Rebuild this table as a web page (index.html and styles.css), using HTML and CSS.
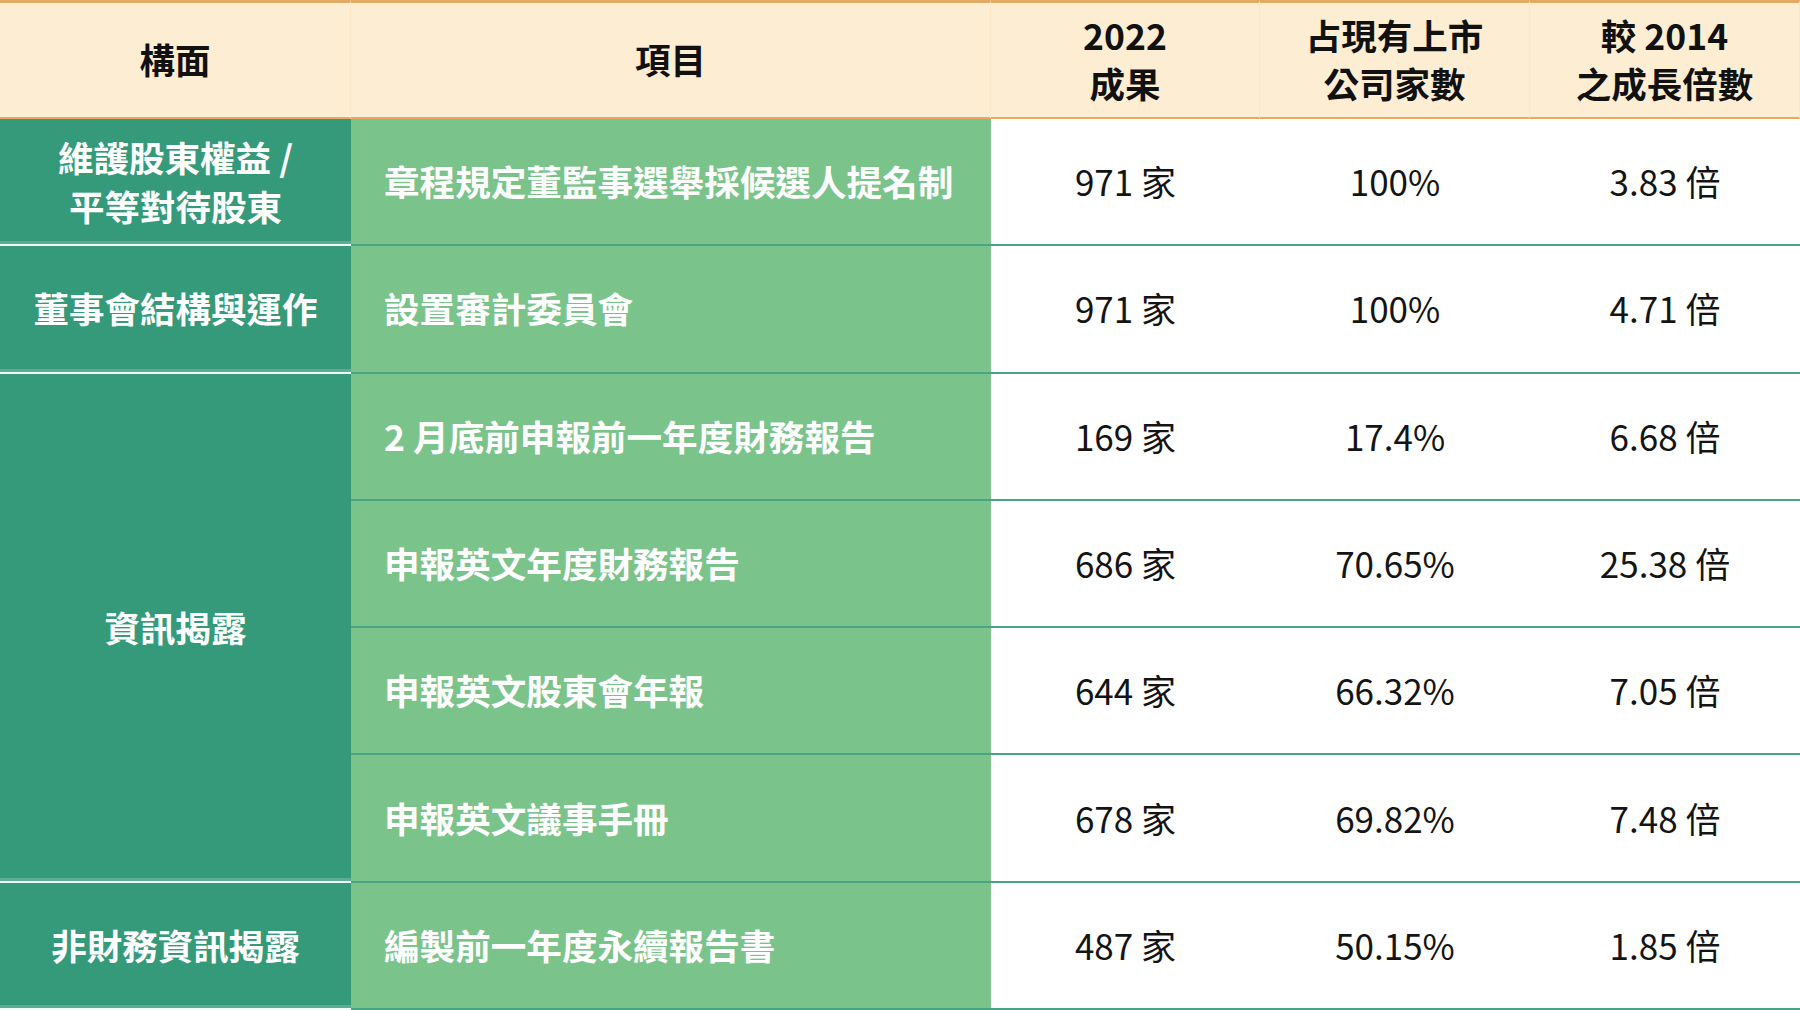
FILE: index.html
```html
<!DOCTYPE html>
<html lang="zh-Hant">
<head>
<meta charset="utf-8">
<title>公司治理成果</title>
<link rel="stylesheet" href="styles.css">
</head>
<body>
<div class="table">
  <div class="hd">構面</div>
  <div class="hd">項目</div>
  <div class="hd">2022<br>成果</div>
  <div class="hd">占現有上市<br>公司家數</div>
  <div class="hd">較 2014<br>之成長倍數</div>

  <div class="cat">維護股東權益 /<br>平等對待股東</div>
  <div class="item">章程規定董監事選舉採候選人提名制</div>
  <div class="num">971 家</div>
  <div class="num">100%</div>
  <div class="num">3.83 倍</div>

  <div class="cat">董事會結構與運作</div>
  <div class="item">設置審計委員會</div>
  <div class="num">971 家</div>
  <div class="num">100%</div>
  <div class="num">4.71 倍</div>

  <div class="cat span4">資訊揭露</div>
  <div class="item">2 月底前申報前一年度財務報告</div>
  <div class="num">169 家</div>
  <div class="num">17.4%</div>
  <div class="num">6.68 倍</div>

  <div class="item">申報英文年度財務報告</div>
  <div class="num">686 家</div>
  <div class="num">70.65%</div>
  <div class="num">25.38 倍</div>

  <div class="item">申報英文股東會年報</div>
  <div class="num">644 家</div>
  <div class="num">66.32%</div>
  <div class="num">7.05 倍</div>

  <div class="item">申報英文議事手冊</div>
  <div class="num">678 家</div>
  <div class="num">69.82%</div>
  <div class="num">7.48 倍</div>

  <div class="cat">非財務資訊揭露</div>
  <div class="item">編製前一年度永續報告書</div>
  <div class="num">487 家</div>
  <div class="num">50.15%</div>
  <div class="num">1.85 倍</div>
</div>
</body>
</html>
```

FILE: styles.css
```css
* { box-sizing: border-box; }
html, body { margin: 0; padding: 0; background: #ffffff; }
body {
  font-family: "Noto Sans CJK TC", "Noto Sans", sans-serif;
  width: 1800px;
  height: 1010px;
  overflow: hidden;
}
.table {
  display: grid;
  grid-template-columns: 351px 640px 269px 270px 270px;
  grid-template-rows: 119px repeat(7, 1fr);
  height: 1010px;
}
.hd {
  background: #fdedd2;
  border-top: 3px solid #e2aa62;
  border-bottom: 2px solid #e2aa62;
  border-right: 1px solid #fae8cb;
  display: flex;
  align-items: center;
  justify-content: center;
  text-align: center;
  font-size: 35.5px;
  font-weight: 700;
  line-height: 48px;
  color: #111;
  padding-bottom: 2px;
}
.hd:last-child { border-right: none; }
.cat {
  background: #359a7a;
  color: #fff;
  font-size: 35.5px;
  font-weight: 700;
  line-height: 49px;
  display: flex;
  align-items: center;
  justify-content: center;
  text-align: center;
  border-bottom: 2px solid #f2f9f6;
  box-shadow: inset 0 -3px 0 #5aad91;
  padding-bottom: 2px;
}
.span4 { grid-row: span 4; }
.item {
  background: #7ac48c;
  color: #fff;
  font-size: 35.6px;
  font-weight: 700;
  display: flex;
  align-items: center;
  padding-left: 33px;
  border-bottom: 2px solid #48a583;
  padding-bottom: 2px;
}
.num {
  background: #fff;
  color: #141414;
  font-size: 35px;
  font-weight: 400;
  display: flex;
  align-items: center;
  justify-content: center;
  border-bottom: 2px solid #48a583;
  padding-bottom: 2px;
}
```
